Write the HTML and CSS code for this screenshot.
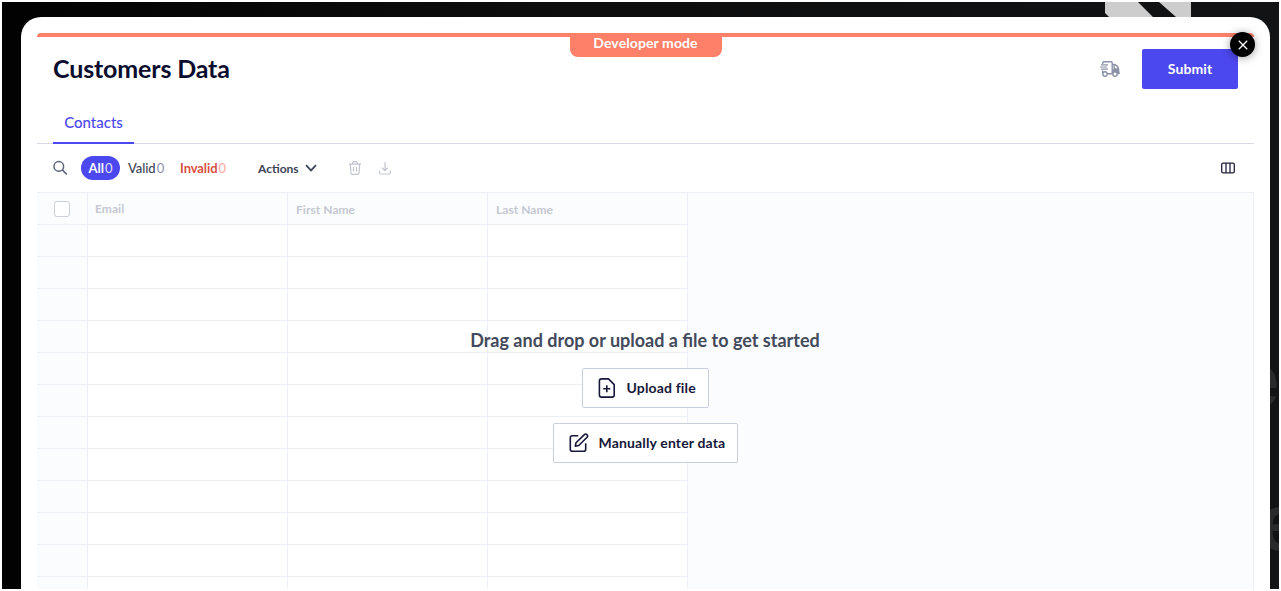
FILE: index.html
```html
<!DOCTYPE html>
<html lang="en">
<head>
    <meta charset="UTF-8">
    <meta name="viewport" content="width=device-width, initial-scale=1.0">
    <title>Customers Data</title>
    <link rel="stylesheet" href="styles.css">
</head>
<body>
    <div class="stage">
        <svg class="backdrop" width="86" height="15" viewBox="0 0 86 15">
            <path d="M0 0H33L48 15H4L0 11Z M54 0H86V15H71Z" fill="#cdcdcd"/>
        </svg>
        <span class="ghost ghost-top">e</span>
        <span class="ghost ghost-bottom">e</span>

        <div class="modal">
            <div class="dev-bar"><span class="dev-label">Developer mode</span></div>

            <header class="header">
                <h1 class="title">Customers Data</h1>
                <svg class="truck" width="20" height="16" viewBox="0 0 20 16" fill="none" stroke="#8b92a8" stroke-width="1.4">
                    <path d="M2.8 3V1.7Q2.8 .8 3.8 .8H11.2Q12.2 .8 12.2 1.8V12.5M12.2 3.5H14.5Q18.3 5 18.6 8.5V12.5H17M7 12.8H12.8M2.6 9.5V12.5"/>
                    <path d="M14.2 4V8H18.2"/>
                    <path d="M12.5 8H19V10L20 12.8H12.5Z" fill="#8b92a8" stroke="none"/>
                    <path d="M1 3.9H8M0 6H7M1 8.1H8" stroke-width="1.2"/>
                    <circle cx="5" cy="13" r="2.2" fill="#fff"/>
                    <circle cx="15" cy="13" r="2.2" fill="#fff"/>
                </svg>
                <button class="submit">Submit</button>
            </header>

            <nav class="tabs"><a class="tab">Contacts</a></nav>

            <div class="toolbar">
                <svg class="search" width="16" height="16" viewBox="0 0 16 16" fill="none" stroke="#5d6478" stroke-width="1.5">
                    <circle cx="5.8" cy="6.4" r="4.8"/>
                    <path d="M9.3 9.9L13.8 14.4"/>
                </svg>
                <span class="filter filter-all">All <b>0</b></span>
                <span class="filter filter-valid">Valid <b>0</b></span>
                <span class="filter filter-invalid">Invalid <b>0</b></span>
                <span class="actions">Actions</span>
                <svg class="chevron" width="12" height="8" viewBox="0 0 12 8" fill="none" stroke="#3c4354" stroke-width="1.7">
                    <path d="M1 1.2L6 6.4L11 1.2"/>
                </svg>
                <svg class="trash" width="12" height="14" viewBox="0 0 12 14" fill="none" stroke="#c2c5cf" stroke-width="1.2">
                    <path d="M0 3.2H12M3.7 3V1.6Q3.7 .7 4.6 .7H7.4Q8.3 .7 8.3 1.6V3M1.4 3.5L1.9 12Q2 13.3 3.3 13.3H8.7Q10 13.3 10.1 12L10.6 3.5M4.5 6V10.5M7.5 6V10.5"/>
                </svg>
                <svg class="download" width="12" height="13" viewBox="0 0 12 13" fill="none" stroke="#c2c5cf" stroke-width="1.2">
                    <path d="M6 0V8.5M3 5.7L6 8.6L9 5.7M.6 8.5V10.5Q.6 12 2.1 12H9.9Q11.4 12 11.4 10.5V8.5"/>
                </svg>
                <svg class="columns" width="14" height="12" viewBox="0 0 14 12" fill="none" stroke="#25233f" stroke-width="1.3">
                    <rect x=".7" y="1.1" width="12.6" height="9.8" rx="1.4"/>
                    <path d="M5 1V11M9 1V11"/>
                </svg>
            </div>

            <div class="sheet">
                <div class="grid">
                    <div class="row row-head">
                        <div class="cell cell-index"><span class="checkbox"></span></div>
                        <div class="cell cell-email">Email</div>
                        <div class="cell">First Name</div>
                        <div class="cell">Last Name</div>
                    </div>
                    <div class="row"><div class="cell cell-index"></div><div class="cell"></div><div class="cell"></div><div class="cell"></div></div>
                    <div class="row"><div class="cell cell-index"></div><div class="cell"></div><div class="cell"></div><div class="cell"></div></div>
                    <div class="row"><div class="cell cell-index"></div><div class="cell"></div><div class="cell"></div><div class="cell"></div></div>
                    <div class="row"><div class="cell cell-index"></div><div class="cell"></div><div class="cell"></div><div class="cell"></div></div>
                    <div class="row"><div class="cell cell-index"></div><div class="cell"></div><div class="cell"></div><div class="cell"></div></div>
                    <div class="row"><div class="cell cell-index"></div><div class="cell"></div><div class="cell"></div><div class="cell"></div></div>
                    <div class="row"><div class="cell cell-index"></div><div class="cell"></div><div class="cell"></div><div class="cell"></div></div>
                    <div class="row"><div class="cell cell-index"></div><div class="cell"></div><div class="cell"></div><div class="cell"></div></div>
                    <div class="row"><div class="cell cell-index"></div><div class="cell"></div><div class="cell"></div><div class="cell"></div></div>
                    <div class="row"><div class="cell cell-index"></div><div class="cell"></div><div class="cell"></div><div class="cell"></div></div>
                    <div class="row"><div class="cell cell-index"></div><div class="cell"></div><div class="cell"></div><div class="cell"></div></div>
                    <div class="row"><div class="cell cell-index"></div><div class="cell"></div><div class="cell"></div><div class="cell"></div></div>
                </div>

                <div class="empty">
                    <p class="empty-text">Drag and drop or upload a file to get started</p>
                    <button class="choice choice-upload">
                        <svg width="18" height="20" viewBox="0 0 18 20" fill="none" stroke="#16173a" stroke-width="1.6">
                            <path d="M3.5 .9H10.5L16.2 6.6V17Q16.2 19.1 14.1 19.1H3.5Q1.4 19.1 1.4 17V3Q1.4 .9 3.5 .9Z" stroke-linejoin="round"/>
                            <path d="M8.8 7.3V14.3M5.3 10.8H12.3"/>
                        </svg>
                        <span>Upload file</span>
                    </button>
                    <button class="choice choice-manual">
                        <svg width="20" height="20" viewBox="0 0 20 20" fill="none" stroke="#16173a" stroke-width="1.6" stroke-linejoin="round">
                            <path d="M9.3 2.8H3.3Q1.3 2.8 1.3 4.8V16.3Q1.3 18.3 3.3 18.3H14.7Q16.7 18.3 16.7 16.3V10.3"/>
                            <path d="M6.3 13.2L7 9.8L15.4 1.6Q16.6 .4 18 1.7Q19.3 3.1 18.1 4.3L9.7 12.5Z"/>
                        </svg>
                        <span>Manually enter data</span>
                    </button>
                </div>
            </div>

            <button class="close">
                <svg width="10" height="10" viewBox="0 0 10 10" stroke="#fff" stroke-width="1.3"><path d="M.8 .8L9.2 9.2M9.2 .8L.8 9.2"/></svg>
            </button>
        </div>
    </div>
</body>
</html>
```
FILE: styles.css
```css
* {
    box-sizing: border-box;
}

body {
    margin: 0;
    padding: 2px;
    height: 591px;
    overflow: hidden;
    background-color: #fff;
    font-family: Lato, "Open Sans", sans-serif;
}

button {
    font-family: inherit;
    cursor: pointer;
}

svg {
    display: block;
    flex: none;
}

.stage {
    position: relative;
    height: 587px;
    padding: 15px 9px 0 19px;
    overflow: hidden;
    background: linear-gradient(90deg, #020203, #0d0d0e 40%, #121314);
}

/* decoration behind the dialog */
.backdrop {
    position: absolute;
    left: 1103px;
    top: 0;
}

.ghost {
    position: absolute;
    font: bold 80px/80px "Liberation Sans", sans-serif;
    color: #292a2b;
}

.ghost-top {
    left: 1233px;
    top: 338px;
}

.ghost-bottom {
    left: 1256px;
    top: 481px;
}

.modal {
    position: relative;
    height: 600px;
    padding: 16px 16px 0;
    border-radius: 20px;
    background-color: #fff;
}

.dev-bar {
    display: flex;
    justify-content: center;
    height: 4px;
    background-color: #ff8069;
    border-radius: 4px 4px 0 0;
}

.dev-label {
    width: 152px;
    height: 24px;
    border-radius: 0 0 8px 8px;
    background-color: #ff8069;
    color: #fff;
    font-size: 14px;
    font-weight: bold;
    letter-spacing: 0.1px;
    line-height: 20px;
    text-align: center;
}

.header {
    display: flex;
    align-items: center;
    height: 64px;
    padding: 0 16px;
}

.title {
    flex: 1;
    margin: 0;
    padding-bottom: 2px;
    font-size: 25px;
    letter-spacing: -0.15px;
    line-height: 30px;
    color: #0b0d2e;
}

.truck {
    margin-right: 22px;
}

.submit {
    width: 96px;
    height: 40px;
    padding: 0 0 2px;
    border: none;
    border-radius: 2px;
    background-color: #4c48ef;
    color: #fff;
    font-size: 14px;
    font-weight: bold;
    letter-spacing: 0.1px;
}

.tabs {
    display: flex;
    height: 43px;
    padding: 0 16px;
    border-bottom: 1px solid #d6d9e6;
}

.tab {
    width: 81px;
    height: 43px;
    border-bottom: 2px solid #4c48ef;
    color: #4c48ef;
    font-size: 15px;
    font-weight: 500;
    line-height: 42px;
    text-align: center;
}

.toolbar {
    display: flex;
    align-items: center;
    height: 48px;
    padding: 0 19px 0 16px;
    font-size: 13px;
    color: #3c4354;
}

.filter {
    height: 24px;
    line-height: 24px;
    font-size: 13px;
    font-weight: 500;
    white-space: nowrap;
    word-spacing: -2px;
}

.filter b {
    font-weight: 400;
    color: #8b92a8;
}

.filter-all {
    width: 39px;
    margin-left: 12px;
    border-radius: 12px;
    background-color: #4c48ef;
    color: #fff;
    font-weight: bold;
    text-align: center;
}

.filter-all b {
    color: #e3e2ff;
}

.filter-valid {
    width: 60px;
    padding-left: 8px;
    letter-spacing: -0.1px;
}

.filter-invalid {
    width: 78px;
    color: #d9503f;
    font-weight: bold;
    letter-spacing: -0.1px;
}

.filter-invalid b {
    color: #ffa79b;
}

.actions {
    width: 47px;
    font-size: 12px;
    font-weight: bold;
}

.trash {
    margin-left: 32px;
}

.download {
    margin-left: 18px;
}

.columns {
    margin-left: auto;
}

.sheet {
    position: relative;
    height: 400px;
    border: 1px solid #edeff6;
    border-left: none;
    background-color: #fbfcfe;
}

.grid {
    width: 651px;
}

.row {
    display: grid;
    grid-template-columns: 51px 200px 200px 200px;
    grid-template-rows: 32px;
    height: 32px;
}

.cell {
    border-right: 1px solid #edeff6;
    border-bottom: 1px solid #edeff6;
    background-color: #fff;
}

.cell-index,
.row-head .cell {
    background-color: #fbfcfe;
}

.row-head .cell {
    padding-left: 8px;
    color: #c5c8d1;
    font-size: 12px;
    font-weight: bold;
    letter-spacing: 0.05px;
    line-height: 34px;
}

.row-head .cell-email {
    padding-left: 7px;
    line-height: 32px;
}

.checkbox {
    display: block;
    width: 16px;
    height: 16px;
    margin: 8px 0 0 9px;
    border: 1px solid #cdd0d8;
    border-radius: 3px;
    background-color: #fff;
}

/* prompt lying over the empty table */
.empty {
    position: absolute;
    left: 0;
    right: 0;
    top: 135px;
    display: flex;
    flex-direction: column;
    align-items: center;
}

.empty-text {
    margin: 0 0 16px;
    font-size: 18px;
    font-weight: bold;
    line-height: 24px;
    color: #434a5b;
}

.choice {
    display: flex;
    align-items: center;
    height: 40px;
    margin-bottom: 15px;
    padding: 0 0 0 15px;
    border: 1px solid #c9cde0;
    border-radius: 2px;
    background-color: #fff;
    color: #16173a;
    font-size: 14px;
    font-weight: bold;
    letter-spacing: 0.15px;
    white-space: nowrap;
}

.choice span {
    padding-bottom: 2px;
}

.choice-upload {
    width: 127px;
    gap: 11px;
}

.choice-manual {
    width: 185px;
    gap: 10px;
}

.close {
    position: absolute;
    top: 15px;
    right: 15px;
    display: flex;
    align-items: center;
    justify-content: center;
    width: 25px;
    height: 25px;
    padding: 0;
    border: none;
    border-radius: 50%;
    background-color: #000;
    box-shadow: 0 1px 8px rgba(0, 0, 0, 0.4);
}
```
